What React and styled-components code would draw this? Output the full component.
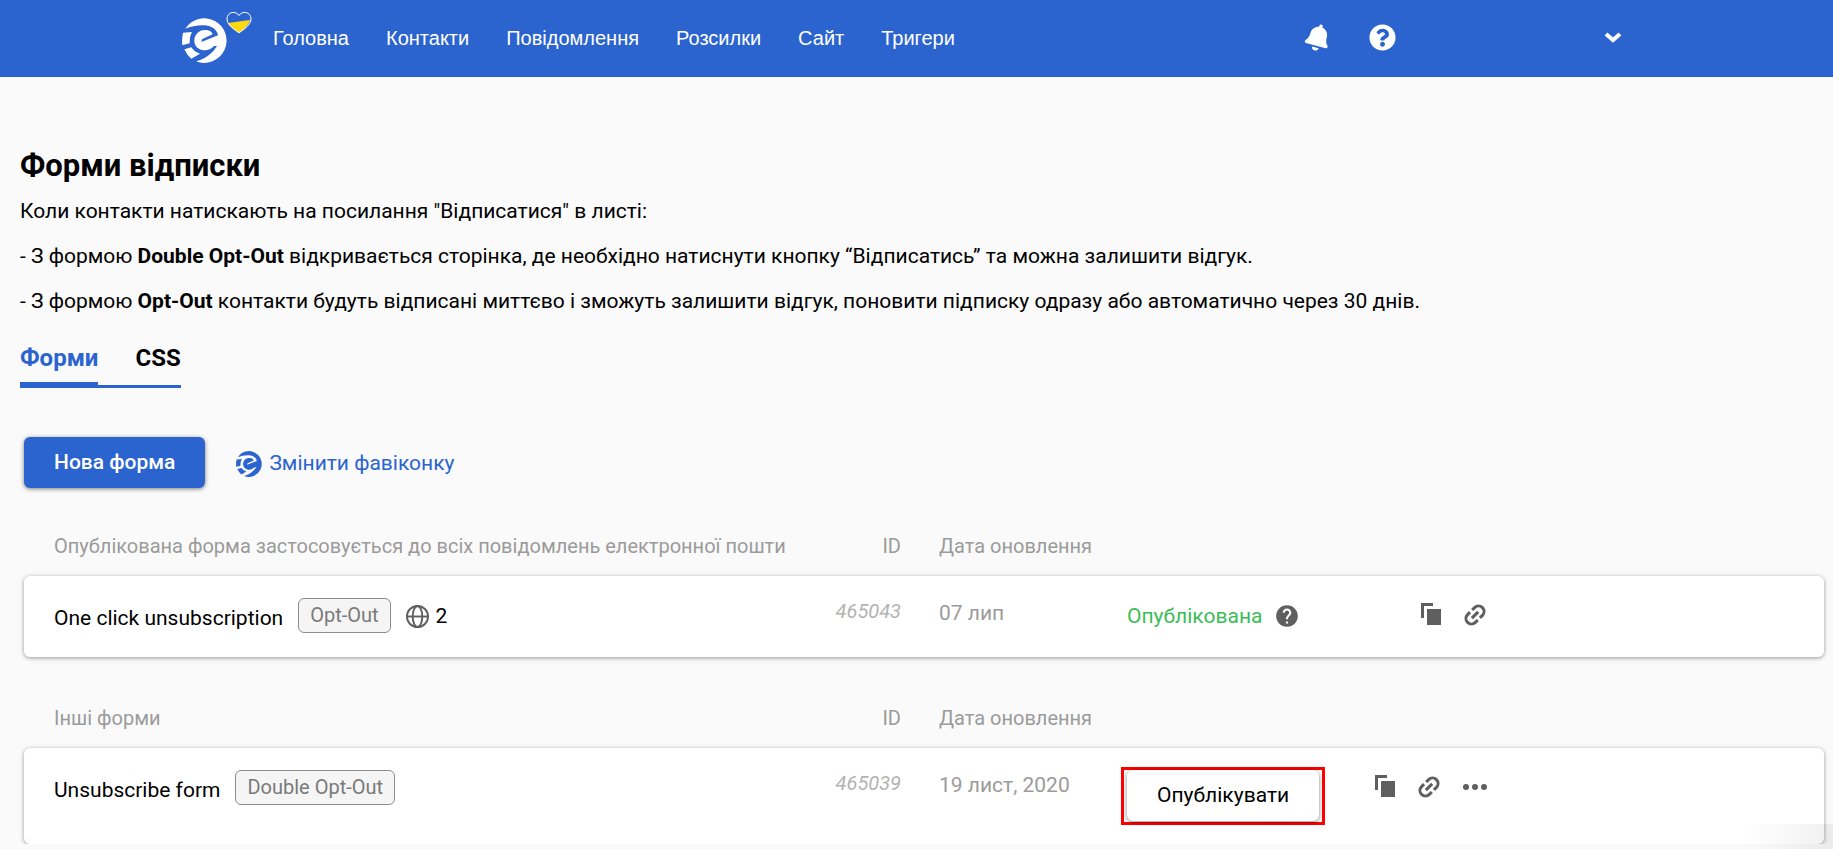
import React from 'react';
import styled, { createGlobalStyle } from 'styled-components';
import { FaBell, FaQuestionCircle } from 'react-icons/fa';
import { MdHelp } from 'react-icons/md';

const GlobalStyle = createGlobalStyle`
  * {
    box-sizing: border-box;
  }
  body {
    margin: 0;
    background: #fafafa;
    color: #000;
    font-family: Roboto, sans-serif;
    font-size: 21px;
    line-height: 25px;
  }
`;

const Header = styled.header`
  display: flex;
  align-items: center;
  height: 77px;
  padding: 0 211px 2px 182px;
  background: #2b64ce;
  color: #fff;
`;

const Brand = styled.a`
  display: flex;
  align-items: flex-end;
  height: 54px;
  margin-right: 21px;
  padding-bottom: 2px;
  color: inherit;
`;

const HeartIcon = styled.svg`
  align-self: flex-start;
  width: 26px;
  height: 23px;
  margin-left: -1px;
`;

const Nav = styled.nav`
  display: flex;
  flex: 1;
  gap: 37px;
`;

const NavLink = styled.a`
  color: inherit;
  font-family: 'Liberation Sans', Arial, sans-serif;
  font-size: 20px;
  line-height: 24px;
  text-decoration: none;
`;

const HeaderActions = styled.div`
  display: flex;
  align-items: center;
  gap: 39px;
`;

const IconButton = styled.button`
  display: flex;
  padding: 0;
  border: 0;
  background: none;
  color: inherit;
  cursor: pointer;
`;

const Bell = styled(FaBell)`
  width: 24px;
  height: 27px;
  transform: rotate(15deg);
`;

const AccountButton = styled(IconButton)`
  margin-left: 169px;
`;

const Page = styled.main`
  padding: 69px 9px 0 20px;
`;

const Title = styled.h1`
  margin: 0 0 13px;
  font-size: 31px;
  line-height: 40px;
  font-weight: 700;
`;

const Text = styled.p`
  margin: 0 0 20px;
`;

const Tabs = styled.div`
  display: inline-flex;
  gap: 37px;
  margin-top: 7px;
  border-bottom: 3px solid #2b64ce;
`;

const Tab = styled.button`
  height: 47px;
  margin-bottom: -3px;
  padding: 0 0 8px;
  border: 0;
  border-bottom: 6px solid ${({ $active }) => ($active ? '#2b64ce' : 'transparent')};
  background: none;
  color: ${({ $active }) => ($active ? '#2b64ce' : '#000')};
  font: 700 24px/28px Roboto, sans-serif;
  cursor: pointer;
`;

const Toolbar = styled.div`
  display: flex;
  align-items: center;
  gap: 31px;
  margin: 49px 0 0 4px;
`;

const Button = styled.button`
  height: 51px;
  padding: 0 30px;
  border: 0;
  border-radius: 6px;
  background: ${({ $primary }) => ($primary ? '#2b64ce' : '#fff')};
  color: ${({ $primary }) => ($primary ? '#fff' : '#000')};
  box-shadow: 0 1px 4px rgba(0, 0, 0, 0.5);
  font: ${({ $primary }) => ($primary ? 500 : 400)} 21px/25px Roboto, sans-serif;
  cursor: pointer;
`;

const FaviconLink = styled.a`
  display: flex;
  align-items: center;
  gap: 7px;
  padding-top: 2px;
  color: #2b64ce;
  text-decoration: none;
`;

const Tables = styled.div`
  display: flex;
  flex-direction: column;
  gap: 45px;
  margin: 42px 0 0 4px;
`;

const Table = styled.table`
  display: block;

  thead,
  tbody {
    display: block;
  }
`;

const Row = styled.tr`
  display: grid;
  grid-template-columns:
    minmax(0, 727fr) minmax(0, 120fr) minmax(0, 226fr)
    minmax(0, 232fr) minmax(0, 128fr) minmax(0, 337fr);
  padding-left: 30px;
`;

const Card = styled(Row)`
  padding-top: 22px;
  padding-bottom: 22px;
  border-radius: 6px;
  background: #fff;
  box-shadow: 0 1px 4px rgba(0, 0, 0, 0.4);
`;

const HeadCell = styled.th`
  height: 46px;
  padding: 4px 0 0 ${({ $indent }) => ($indent ? '38px' : '0')};
  color: #9b9b9b;
  font-size: 20px;
  font-weight: 400;
  line-height: 24px;
  text-align: ${({ $right }) => ($right ? 'right' : 'left')};
  white-space: nowrap;
`;

const NameCell = styled.td`
  display: flex;
  align-items: flex-start;
  height: 37px;
  padding: 0;
`;

const FormName = styled.span`
  margin-right: 15px;
  padding-top: 8px;
`;

const Tag = styled.span`
  height: 35px;
  padding: 4px 11px;
  border: 1px solid #8c8c8c;
  border-radius: 6px;
  background: #f5f5f5;
  color: #7a7a7a;
  font-size: 20px;
`;

const Languages = styled.span`
  display: flex;
  align-items: center;
  gap: 7px;
  margin-left: 15px;
  padding-top: 6px;
`;

const IdCell = styled.td`
  padding: 1px 0 0;
  color: #b3b3b3;
  font-size: 20px;
  font-style: italic;
  line-height: 24px;
  text-align: right;
`;

const DateCell = styled.td`
  padding: 3px 0 0 38px;
  color: #9b9b9b;
`;

const StatusCell = styled.td`
  padding: 0;
`;

const Published = styled.span`
  display: flex;
  align-items: center;
  gap: 12px;
  padding-top: 5px;
  color: #3cbc57;

  svg {
    color: #5f5f5f;
  }
`;

const Highlight = styled.div`
  display: inline-flex;
  margin: -3px -6px;
  padding: 0 3px 1px;
  border: 3px solid #ff0000;
`;

const ActionsCell = styled.td`
  display: flex;
  align-items: flex-start;
  justify-content: flex-end;
  gap: 22px;
  padding: 5px 0 0;
  color: #5f5f5f;
`;

const CornerShade = styled.div`
  position: fixed;
  right: 0;
  bottom: 0;
  width: 88px;
  height: 25px;
  background: linear-gradient(to right, rgba(0, 0, 0, 0), rgba(0, 0, 0, 0.06));
  pointer-events: none;
`;

const Logo = ({ size }) => (
  <svg width={size} height={size} viewBox="0 0 135 135" fill="currentColor" aria-hidden="true">
    <path d="M10 32 A67 67 0 1 1 42 130 C66 124 91 108 105 84 L96 84 C86 95 73 99 60 96 C47 93 38 84 37 70 C36 52 50 36 68 36 C82 35 90 42 92 49 L60 64 L58 72 L108 52 C105 34 88 23 66 22 C46 21 27 26 10 32 Z" />
    <path d="M3 44 L30 42 Q23 54 23 76 L1 82 Q-1 62 3 44 Z" />
    <path d="M7 94 L28 88 Q37 102 54 107 L28 122 Q15 112 7 94 Z" />
  </svg>
);

const Heart = () => (
  <HeartIcon viewBox="0 0 26 23" aria-hidden="true">
    <path d="M2 12 L24 9 C23 14 18 18 13 22 C8 18 4 16 2 12Z" fill="#ffd90f" />
    <path
      d="M13 4.500 C10 -0.500 1 0.500 1 8 C1 14 8 18 13 22 C18 18 25 14 25 8 C25 0.500 16 -0.500 13 4.500Z"
      fill="none"
      stroke="#fff"
    />
  </HeartIcon>
);

const ChevronIcon = () => (
  <svg width="18" height="12" viewBox="0 0 18 12" aria-hidden="true">
    <path d="M2 2 L9 8 L16 2" fill="none" stroke="currentColor" strokeWidth="4" />
  </svg>
);

const GlobeIcon = () => (
  <svg width="23" height="23" viewBox="0 0 24 24" fill="none" stroke="#5f5f5f" strokeWidth="2" aria-hidden="true">
    <circle cx="12" cy="12" r="11" />
    <ellipse cx="12" cy="12" rx="5" ry="11" />
    <path d="M1 12h22" />
  </svg>
);

const CopyIcon = () => (
  <svg width="20" height="23" viewBox="0 0 20 23" fill="currentColor" aria-hidden="true">
    <path d="M0 0h12v3H3v12H0zM6 6h14v16H6z" />
  </svg>
);

const LinkIcon = () => (
  <svg width="24" height="24" viewBox="0 0 24 24" fill="none" stroke="currentColor" strokeWidth="3" aria-hidden="true">
    <g transform="rotate(-45 12 12)">
      <path d="M10.5 6.5H7a5.5 5.5 0 0 0 0 11h3.500M13.500 6.500H17a5.500 5.500 0 0 1 0 11h-3.500M7.500 12h9" />
    </g>
  </svg>
);

const MoreIcon = () => (
  <svg width="24" height="24" viewBox="0 0 24 24" fill="currentColor" aria-hidden="true">
    <circle cx="3" cy="12" r="3" />
    <circle cx="12" cy="12" r="3" />
    <circle cx="21" cy="12" r="3" />
  </svg>
);

const menu = ['Головна', 'Контакти', 'Повідомлення', 'Розсилки', 'Сайт', 'Тригери'];

const forms = [
  {
    heading: 'Опублікована форма застосовується до всіх повідомлень електронної пошти',
    name: 'One click unsubscription',
    type: 'Opt-Out',
    languages: 2,
    id: 465043,
    date: '07 лип',
    published: true,
  },
  {
    heading: 'Інші форми',
    name: 'Unsubscribe form',
    type: 'Double Opt-Out',
    id: 465039,
    date: '19 лист, 2020',
    published: false,
  },
];

const FormTable = ({ form }) => (
  <Table>
    <thead>
      <Row>
        <HeadCell>{form.heading}</HeadCell>
        <HeadCell $right>ID</HeadCell>
        <HeadCell $indent>Дата оновлення</HeadCell>
      </Row>
    </thead>
    <tbody>
      <Card>
        <NameCell>
          <FormName>{form.name}</FormName>
          <Tag>{form.type}</Tag>
          {form.languages && (
            <Languages>
              <GlobeIcon />
              {form.languages}
            </Languages>
          )}
        </NameCell>
        <IdCell>{form.id}</IdCell>
        <DateCell>{form.date}</DateCell>
        <StatusCell>
          {form.published ? (
            <Published>
              Опублікована
              <MdHelp size={26} />
            </Published>
          ) : (
            <Highlight>
              <Button>Опублікувати</Button>
            </Highlight>
          )}
        </StatusCell>
        <ActionsCell>
          <IconButton aria-label="Копіювати">
            <CopyIcon />
          </IconButton>
          <IconButton aria-label="Посилання">
            <LinkIcon />
          </IconButton>
          {!form.published && (
            <IconButton aria-label="Більше">
              <MoreIcon />
            </IconButton>
          )}
        </ActionsCell>
      </Card>
    </tbody>
  </Table>
);

const App = () => {
  return (
    <>
      <GlobalStyle />

      <Header>
        <Brand href="#" aria-label="eSputnik">
          <Logo size={45} />
          <Heart />
        </Brand>
        <Nav>
          {menu.map((item) => (
            <NavLink key={item} href="#">{item}</NavLink>
          ))}
        </Nav>
        <HeaderActions>
          <IconButton aria-label="Сповіщення">
            <Bell />
          </IconButton>
          <IconButton aria-label="Допомога">
            <FaQuestionCircle size={27} />
          </IconButton>
          <AccountButton aria-label="Акаунт">
            <ChevronIcon />
          </AccountButton>
        </HeaderActions>
      </Header>

      <Page>
        <Title>Форми відписки</Title>
        <Text>Коли контакти натискають на посилання "Відписатися" в листі:</Text>
        <Text>
          - З формою <b>Double Opt-Out</b> відкривається сторінка, де необхідно натиснути кнопку “Відписатись” та можна залишити відгук.
        </Text>
        <Text>
          - З формою <b>Opt-Out</b> контакти будуть відписані миттєво і зможуть залишити відгук, поновити підписку одразу або автоматично через 30 днів.
        </Text>

        <Tabs role="tablist">
          <Tab role="tab" aria-selected="true" $active>Форми</Tab>
          <Tab role="tab" aria-selected="false">CSS</Tab>
        </Tabs>

        <Toolbar>
          <Button $primary>Нова форма</Button>
          <FaviconLink href="#">
            <Logo size={26} />
            Змінити фавіконку
          </FaviconLink>
        </Toolbar>

        <Tables>
          {forms.map((form) => (
            <FormTable key={form.id} form={form} />
          ))}
        </Tables>
      </Page>

      <CornerShade />
    </>
  );
};

export default App;
